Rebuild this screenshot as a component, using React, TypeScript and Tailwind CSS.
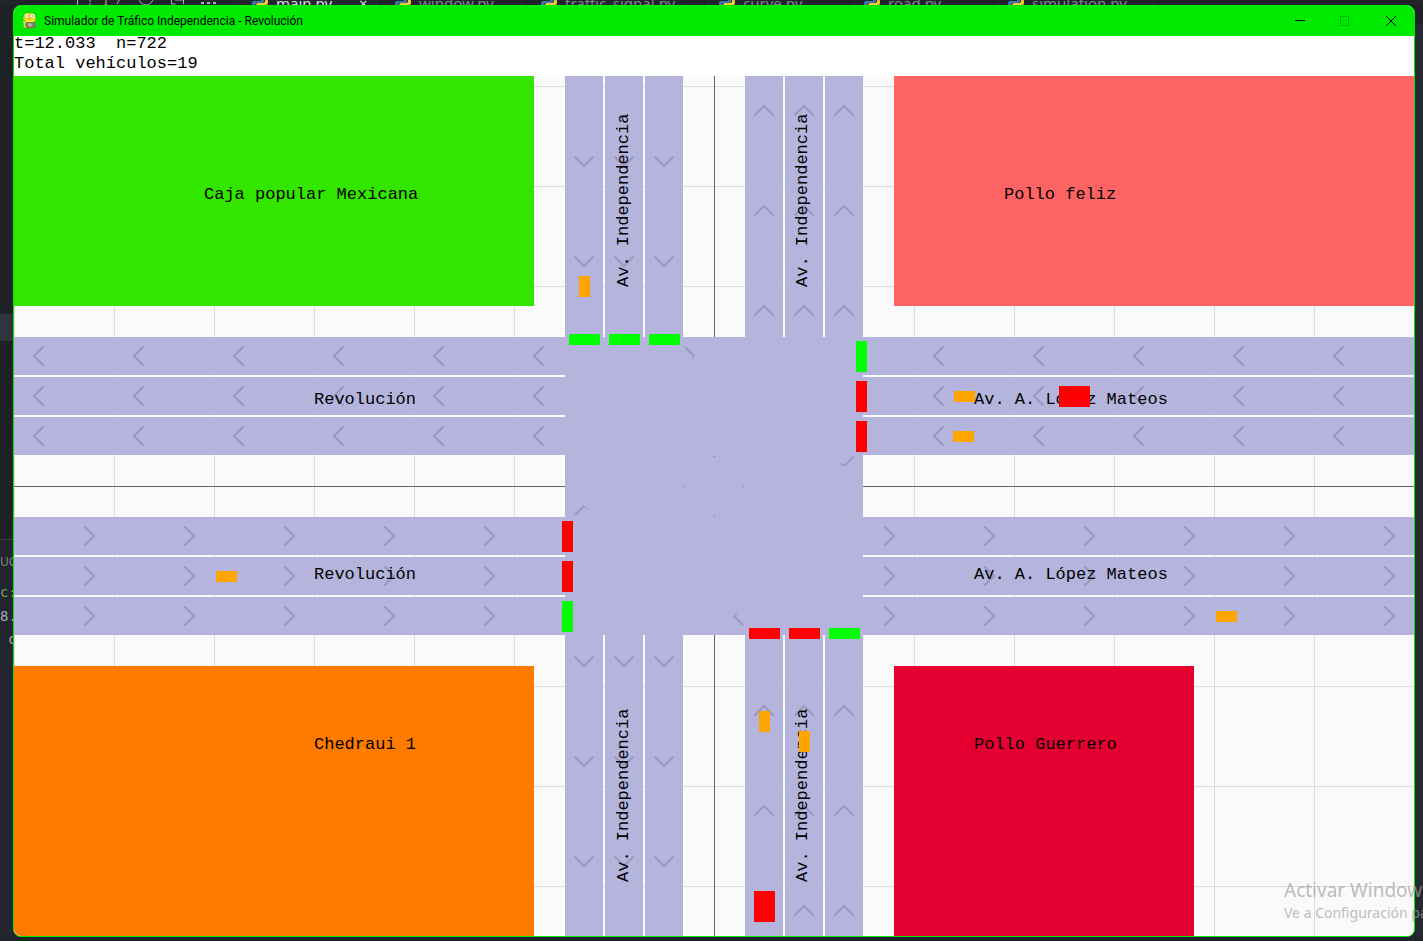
import React from "react";

type Dir = "up" | "down" | "left" | "right";
type Box = [number, number, number, number];

const LANE = "#b4b4dc";
const range = (start: number, count: number, step = 100) =>
  Array.from({ length: count }, (_, i) => start + i * step);

const southLanes = [551, 591, 631];
const northLanes = [731, 771, 811];
const westLanes = [301, 341, 381];
const eastLanes = [481, 521, 561];

const buildings: { box: Box; fill: string; name: string; x: number; y: number }[] = [
  { box: [0, 40, 520, 230], fill: "#33e600", name: "Caja popular Mexicana", x: 190, y: 163 },
  { box: [880, 40, 520, 230], fill: "#ff6464", name: "Pollo feliz", x: 990, y: 163 },
  { box: [0, 630, 520, 270], fill: "#ff7b00", name: "Chedraui 1", x: 300, y: 713 },
  { box: [880, 630, 300, 270], fill: "#e60032", name: "Pollo Guerrero", x: 960, y: 713 },
];

const streetNames = [
  { name: "Revolución", x: 300, y: 368 },
  { name: "Revolución", x: 300, y: 543 },
  { name: "Av. A. López Mateos", x: 960, y: 368 },
  { name: "Av. A. López Mateos", x: 960, y: 543 },
];

const avenueNames = [
  { x: 614, y: 251 },
  { x: 793, y: 251 },
  { x: 614, y: 846 },
  { x: 793, y: 846 },
];

const signals: { box: Box; go: boolean }[] = [
  { box: [555, 298, 31, 11], go: true },
  { box: [595, 298, 31, 11], go: true },
  { box: [635, 298, 31, 11], go: true },
  { box: [842, 305, 11, 31], go: true },
  { box: [842, 345, 11, 31], go: false },
  { box: [842, 385, 11, 31], go: false },
  { box: [548, 485, 11, 31], go: false },
  { box: [548, 525, 11, 31], go: false },
  { box: [548, 565, 11, 31], go: true },
  { box: [735, 592, 31, 11], go: false },
  { box: [775, 592, 31, 11], go: false },
  { box: [815, 592, 31, 11], go: true },
];

const cars: Box[] = [
  [565, 240, 11, 21],
  [940, 355, 21, 11],
  [939, 395, 21, 11],
  [202, 535, 21, 11],
  [1202, 575, 21, 11],
  [745, 675, 11, 21],
  [785, 695, 11, 21],
];

const trucks: Box[] = [
  [1045, 350, 31, 21],
  [740, 855, 21, 31],
];

const chevronShape: Record<Dir, string> = {
  up: "m-9.500 9.500 l9.500 -9.500 l9.500 9.500",
  down: "m-9.500 -9.500 l9.500 9.500 l9.500 -9.500",
  left: "m9.500 -9.500 l-9.500 9.500 l9.500 9.500",
  right: "m-9.500 -9.500 l9.500 9.500 l-9.500 9.500",
};

const arrows: { dir: Dir; x: number; y: number }[] = [
  ...northLanes.flatMap((x) =>
    [...range(70, 3), ...range(670, 3)].map((y) => ({ dir: "up" as Dir, x: x + 19, y })),
  ),
  ...southLanes.flatMap((x) =>
    [...range(130, 2), ...range(630, 3)].map((y) => ({ dir: "down" as Dir, x: x + 19, y })),
  ),
  ...westLanes.flatMap((y) =>
    [...range(20, 6), ...range(920, 5)].map((x) => ({ dir: "left" as Dir, x, y: y + 19 })),
  ),
  ...eastLanes.flatMap((y) =>
    [...range(80, 5), ...range(880, 6)].map((x) => ({ dir: "right" as Dir, x, y: y + 19 })),
  ),
];

function Rect({ box, fill }: { box: Box; fill: string }) {
  return <rect x={box[0]} y={box[1]} width={box[2]} height={box[3]} fill={fill} />;
}

function TrafficMap() {
  return (
    <svg
      viewBox="0 40 1400 860"
      className="block h-auto w-full bg-[#fafafa]"
      role="img"
      aria-label="Cruce Independencia - Revolución"
    >
      <g shapeRendering="crispEdges">
        {range(0, 14).map((x) => (
          <rect key={x} x={x} y={40} width={1} height={860} fill="#dcdcdc" />
        ))}
        {range(50, 9).map((y) => (
          <rect key={y} x={0} y={y} width={1400} height={1} fill="#dcdcdc" />
        ))}
        <rect x={700} y={40} width={1} height={860} fill="#646464" />
        <rect x={0} y={450} width={1400} height={1} fill="#646464" />

        {[...southLanes, ...northLanes].map((x) => (
          <g key={x} fill={LANE}>
            <rect x={x} y={40} width={38} height={262} />
            <rect x={x} y={599} width={38} height={301} />
          </g>
        ))}
        {[...westLanes, ...eastLanes].map((y) => (
          <g key={y} fill={LANE}>
            <rect x={0} y={y} width={552} height={38} />
            <rect x={849} y={y} width={551} height={38} />
          </g>
        ))}
        <rect x={551} y={301} width={298} height={298} fill={LANE} />
        {buildings.map((b) => (
          <Rect key={b.name} box={b.box} fill={b.fill} />
        ))}
        <g fill="#78788c">
          <rect x={700} y={420} width={1} height={1} />
          <rect x={670} y={450} width={1} height={1} />
          <rect x={729} y={450} width={1} height={1} />
          <rect x={700} y={479} width={1} height={1} />
        </g>
      </g>

      <g fill="none" stroke="#9a97c1" strokeWidth={2}>
        {arrows.map((a) => (
          <path key={`${a.dir}-${a.x}-${a.y}`} d={`M${a.x} ${a.y}${chevronShape[a.dir]}`} />
        ))}
        <path d="M671 311l9 9" />
        <path d="M839 421l-9 9" />
        <path d="M561 479l9 -9" />
        <path d="M729 589l-9 -9" />
        <path d="M680 319l-2 4M830 429l-5 -2M569 470l6 3M721 581l2 -5" strokeWidth={1} />
      </g>

      <g
        className="whitespace-pre font-['Liberation_Mono',monospace] text-[17px]"
        fill="#000"
      >
        {buildings.map((b) => (
          <text key={b.name} x={b.x} y={b.y}>
            {b.name}
          </text>
        ))}
        {streetNames.map((s) => (
          <text key={`${s.x}-${s.y}`} x={s.x} y={s.y}>
            {s.name}
          </text>
        ))}
        {avenueNames.map((a) => (
          <text key={`${a.x}-${a.y}`} transform={`translate(${a.x} ${a.y}) rotate(-90)`}>
            Av. Independencia
          </text>
        ))}
      </g>

      <g shapeRendering="crispEdges">
        {signals.map((s) => (
          <Rect key={s.box.join()} box={s.box} fill={s.go ? "#00ff00" : "#ff0000"} />
        ))}
        {cars.map((c) => (
          <Rect key={c.join()} box={c} fill="#ffa500" />
        ))}
        {trucks.map((t) => (
          <Rect key={t.join()} box={t} fill="#ff0000" />
        ))}
      </g>
    </svg>
  );
}

function PythonIcon() {
  return (
    <svg viewBox="0 0 16 16" className="h-4 w-4 shrink-0">
      <path
        d="M8 0C5 0 4 1 4 3v2h5v1H2C0 6 0 8 0 9s0 3 2 3h1V10c0-1 1-2 2-2h5c1 0 2-1 2-2V3c0-2-1-3-4-3z"
        fill="#3b77a8"
      />
      <path
        d="M8 16c3 0 4-1 4-3v-2H7v-1h7c2 0 2-2 2-3s0-3-2-3h-1v2c0 1-1 2-2 2H6c-1 0-2 1-2 2v3c0 2 1 3 4 3z"
        fill="#f2c830"
      />
    </svg>
  );
}

function SnakeIcon() {
  return (
    <svg viewBox="0 0 16 16" className="h-4 w-4 shrink-0">
      <path d="M4 0h6l3 2 1 4-2 3-3 1-5-1-3-3 1-4z" fill="#e3c71a" />
      <path d="M2 6l5 1 6-2-1 3-4 2-4-1z" fill="#f7ea2a" />
      <path d="M3 9h9l2 2-1 4H4l-2-3z" fill="#7c7a62" />
      <path d="M1 8l3 1-1 3 2 3-3-1z" fill="#e9d95a" />
      <path d="M5 11l3-1 3 2-3 2z" fill="#b9b7a4" />
      <path d="M4 15h4" stroke="#e0461e" fill="none" />
      <circle cx={5} cy={3} r={2} fill="#fff" />
      <circle cx={10.500} cy={3} r={2} fill="#fff" />
      <circle cx={5} cy={3} r={0.7} fill="#666" />
      <circle cx={10.500} cy={3} r={0.7} fill="#666" />
    </svg>
  );
}

function TitleBar() {
  return (
    <header className="flex h-[30px] items-center bg-[#00ea00] pl-2 font-['Roboto',sans-serif] text-black">
      <SnakeIcon />
      <h1 className="ml-1.5 flex-1 text-[12px] whitespace-nowrap">
        Simulador de Tráfico Independencia - Revolución
      </h1>
      <button type="button" aria-label="Minimizar" className="flex h-full w-[45px] items-center justify-center">
        <svg viewBox="0 0 10 10" className="h-2.5 w-2.5">
          <rect x={0} y={4} width={10} height={1} />
        </svg>
      </button>
      <button type="button" disabled aria-label="Maximizar" className="flex h-full w-[45px] items-center justify-center">
        <svg viewBox="0 0 10 10" className="h-2.5 w-2.5" fill="none" stroke="#00b400">
          <rect x={0.5} y={0.5} width={8} height={9} />
        </svg>
      </button>
      <button type="button" aria-label="Cerrar" className="flex h-full w-[47px] items-center justify-center">
        <svg viewBox="0 0 10 10" className="h-2.5 w-2.5" stroke="#000">
          <path d="M0 0L10 10M10 0L0 10" />
        </svg>
      </button>
    </header>
  );
}

function EditorTabs() {
  const tab = "flex shrink-0 items-center border-r border-[#181a1f] pl-3.5";
  return (
    <div className="h-[5px] overflow-hidden bg-[#21252b] font-['Noto_Sans',sans-serif] text-[15px] text-[#7f848e]">
      <div className="-mt-[9px] flex h-6">
        <svg viewBox="0 0 238 24" className="h-6 w-[238px] shrink-0" fill="none" stroke="#a9adb5">
          <path d="M77.5 6v8M90 9v2M89 13h2M104 14h3M121 6l-4 7" />
          <path d="M106 7v7" stroke="#d8b45a" />
          <circle cx={146} cy={7} r={7} />
          <path d="M171.500 6v7h4M175 9h8M183.500 6v7" />
          <path d="M201 12h3M207 12h3M213 12h3" strokeWidth={2} />
        </svg>
        <div className={`${tab} w-[143px] bg-[#23272e] text-[#d7dae0]`}>
          <PythonIcon />
          <span className="ml-2 w-[83px]">main.py</span>
          <span>×</span>
        </div>
        <div className={`${tab} w-[146px]`}>
          <PythonIcon />
          <span className="ml-2">window.py</span>
        </div>
        <div className={`${tab} w-[178px]`}>
          <PythonIcon />
          <span className="ml-2">traffic_signal.py</span>
        </div>
        <div className={`${tab} w-[145px]`}>
          <PythonIcon />
          <span className="ml-2">curve.py</span>
        </div>
        <div className={`${tab} w-[144px]`}>
          <PythonIcon />
          <span className="ml-2">road.py</span>
        </div>
        <div className={`${tab} w-[165px]`}>
          <PythonIcon />
          <span className="ml-2">simulation.py</span>
        </div>
      </div>
    </div>
  );
}

function EditorEdge() {
  return (
    <aside className="flex w-[13px] shrink-0 flex-col overflow-hidden bg-[#1e2227]">
      <div className="h-[309px]" />
      <div className="h-[27px] bg-[#2f343e]" />
      <div className="h-[198px]" />
      <div className="flex-1 border-t border-[#3a3f4a] bg-[#23262e] pt-3 font-['DejaVu_Sans_Mono',monospace] text-[14px] text-[#a4a9b3]">
        <p className="h-[30px] font-['Noto_Sans',sans-serif] text-[12px] leading-5 whitespace-nowrap text-[#8a8578]">UG</p>
        <p className="h-6 leading-5 whitespace-nowrap text-[#7f9f68]">c:</p>
        <p className="h-[23px] leading-5 whitespace-nowrap">8.</p>
        <p className="pl-2 leading-5">c</p>
      </div>
    </aside>
  );
}

export default function App() {
  return (
    <div className="relative flex min-h-screen flex-col overflow-hidden bg-[#20232a]">
      <EditorTabs />
      <div className="flex">
        <EditorEdge />
        <main className="min-w-0 flex-1 overflow-hidden rounded-lg border border-[#00ea00] bg-white">
          <TitleBar />
          <div className="flex h-10 flex-col font-['Liberation_Mono',monospace] text-[17px] leading-5 whitespace-pre text-black">
            <p className="-mt-0.5">t=12.033  n=722</p>
            <p>Total vehículos=19</p>
          </div>
          <TrafficMap />
        </main>
        <div className="w-2 shrink-0 bg-[#1e2227] pt-[19px]">
          <div className="h-full bg-[#262932]" />
        </div>
      </div>
      <div className="pointer-events-none absolute right-0 bottom-[17px] w-[139px] overflow-hidden font-['Noto_Sans',sans-serif] whitespace-nowrap text-[#a0a0a0]/70">
        <p className="text-[19px] leading-6">Activar Windows</p>
        <p className="text-[14px] leading-[22px]">Ve a Configuración para activar Windows.</p>
      </div>
    </div>
  );
}
